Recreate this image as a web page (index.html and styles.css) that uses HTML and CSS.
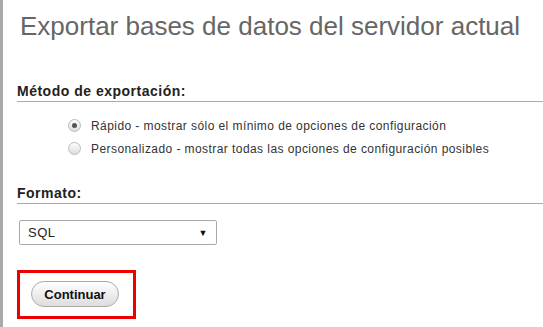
FILE: index.html
```html
<!DOCTYPE html>
<html lang="es">
<head>
  <meta charset="UTF-8">
  <title>Exportar</title>
  <link rel="stylesheet" href="styles.css">
</head>
<body>
  <div class="page">
    <h2 class="title">Exportar bases de datos del servidor actual</h2>

    <div class="group">
      <h3 class="group-title">Método de exportación:</h3>
      <ul class="options">
        <li><span class="radio checked"></span>Rápido - mostrar sólo el mínimo de opciones de configuración</li>
        <li><span class="radio"></span>Personalizado - mostrar todas las opciones de configuración posibles</li>
      </ul>
    </div>

    <div class="group">
      <h3 class="group-title">Formato:</h3>
      <div class="select">
        <span>SQL</span>
        <span class="arrow">&#9660;</span>
      </div>
    </div>

    <div class="submit">
      <button class="btn">Continuar</button>
    </div>
  </div>
</body>
</html>
```

FILE: styles.css
```css
body {
  margin: 0;
  font-family: 'Liberation Sans', Arial, sans-serif;
  background: #fff;
  color: #333;
}

.page {
  border-left: 3px solid #a9a9a9;
  min-height: 327px;
  box-sizing: border-box;
  padding: 9px 0 0 14px;
}

.title {
  margin: 0 0 0 3px;
  font-size: 26px;
  line-height: 34px;
  font-weight: normal;
  color: #666;
}

.group {
  margin-top: 40px;
}

.group + .group {
  margin-top: 25px;
}

.group-title {
  margin: 0;
  padding: 0 0 2px 0;
  font-size: 14px;
  line-height: 16px;
  letter-spacing: 0.5px;
  border-bottom: 1px solid #aaa;
  color: #222;
}

.options {
  list-style: none;
  margin: 12px 0 0 51px;
  padding: 0;
  font-size: 12px;
  letter-spacing: 0.43px;
  color: #333;
}

.options li {
  display: flex;
  align-items: center;
  height: 23px;
}

.radio {
  width: 11px;
  height: 11px;
  border-radius: 50%;
  border: 1px solid #bbb;
  background: linear-gradient(#fdfdfd, #dcdcdc);
  margin-right: 10px;
  position: relative;
}

.radio.checked::after {
  content: "";
  position: absolute;
  left: 3px;
  top: 3px;
  width: 5px;
  height: 5px;
  border-radius: 50%;
  background: #555;
}

.select {
  display: flex;
  justify-content: space-between;
  align-items: center;
  width: 198px;
  height: 25px;
  box-sizing: border-box;
  margin: 16px 0 0 2px;
  padding: 0 8px 0 8px;
  border: 1px solid #aaa;
  border-radius: 2px;
  font-size: 13px;
  letter-spacing: 0.5px;
  color: #222;
}

.arrow {
  font-size: 9px;
  color: #111;
}

.submit {
  display: inline-block;
  margin-top: 25px;
  border: 3px solid #e00;
  padding: 8px 14px 9px 11px;
}

.btn {
  display: block;
  width: 88px;
  height: 26px;
  border: 1px solid #aaa;
  border-radius: 13px;
  background: linear-gradient(#fff, #ddd);
  font-family: 'Liberation Sans', Arial, sans-serif;
  font-size: 13px;
  font-weight: bold;
  color: #111;
  padding: 0;
}
```
